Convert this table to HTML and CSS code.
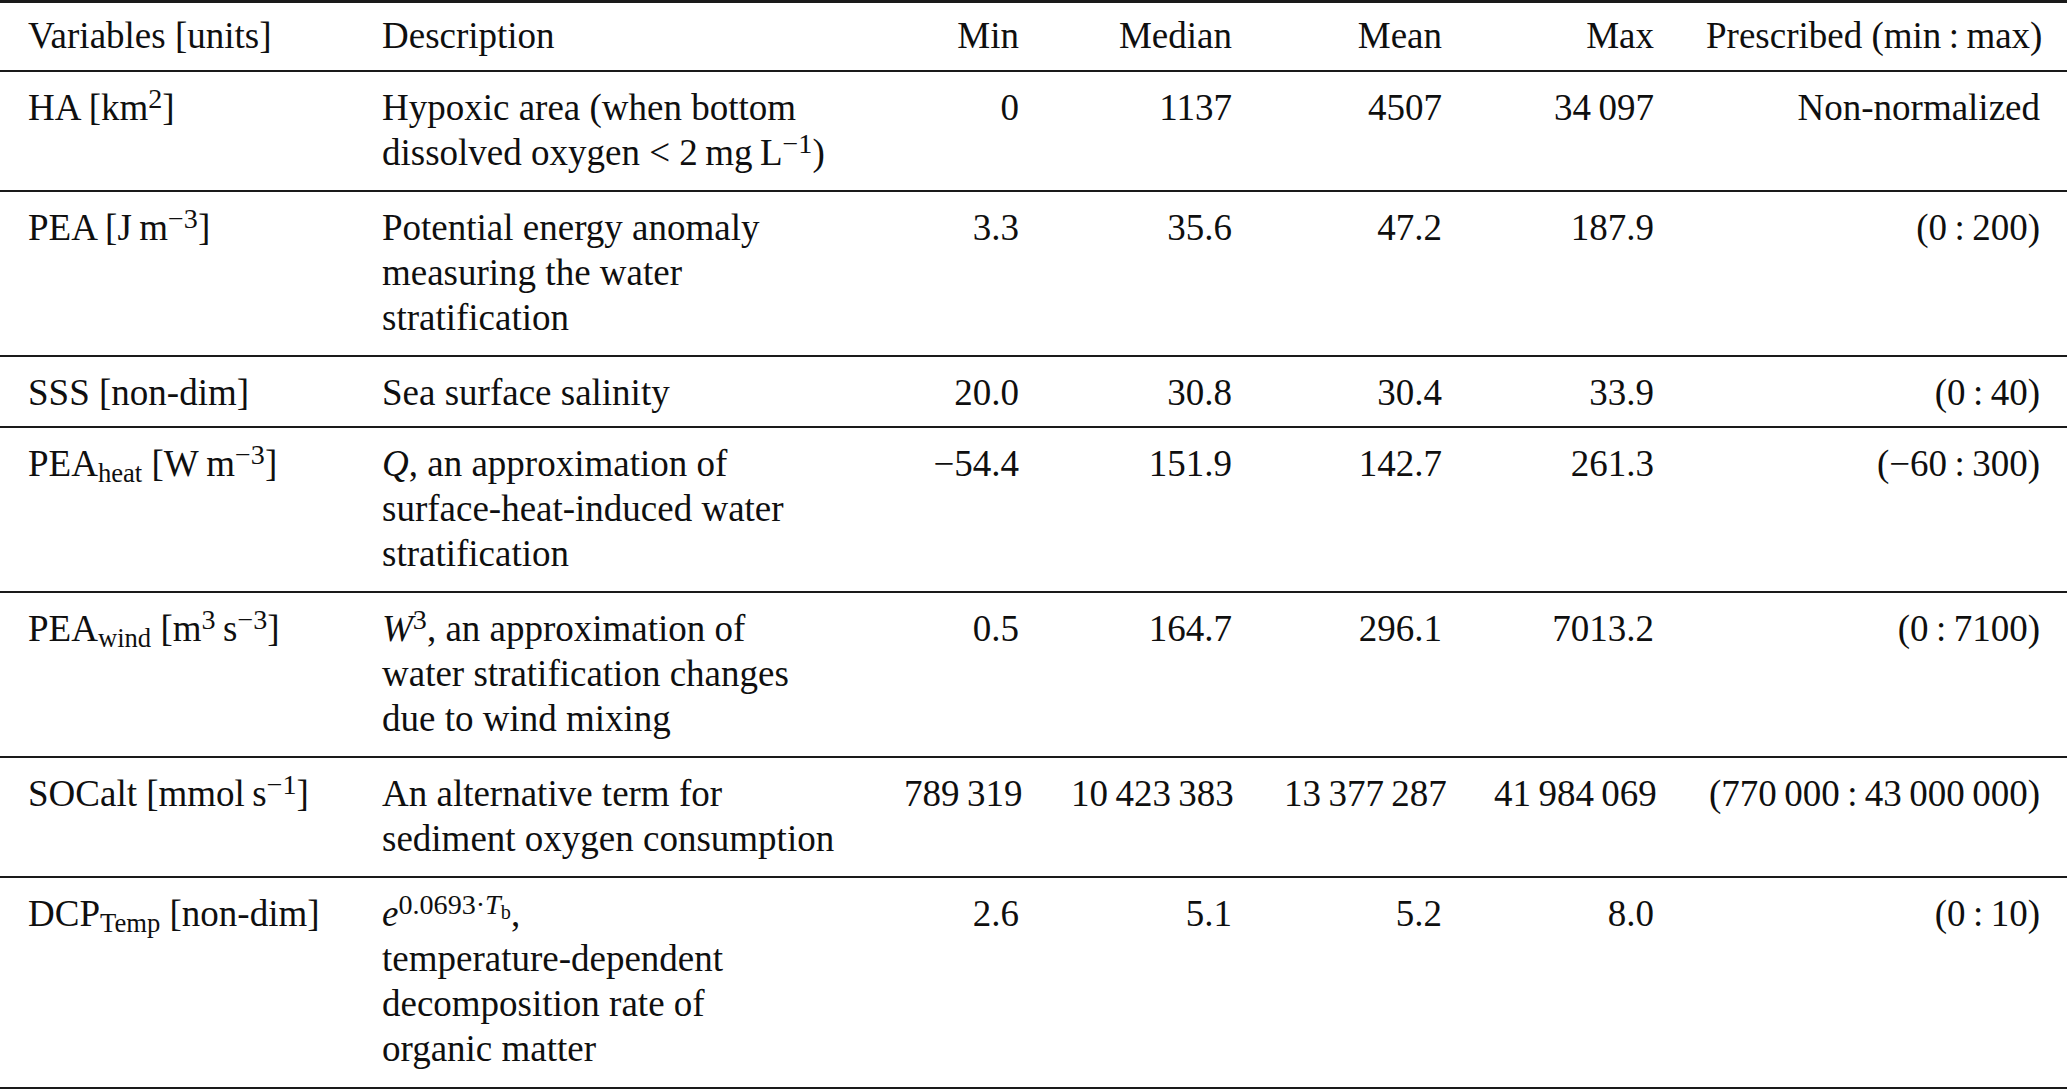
FILE: index.html
```html
<!DOCTYPE html>
<html lang="en">
<head>
<meta charset="utf-8">
<title>Variables</title>
<link rel="stylesheet" href="styles.css">
</head>
<body>
<table class="vars">
  <colgroup>
    <col class="c-var">
    <col class="c-desc">
    <col class="c-min">
    <col class="c-med">
    <col class="c-mean">
    <col class="c-max">
    <col class="c-pre">
  </colgroup>
  <thead>
    <tr class="head">
      <th class="var">Variables [units]</th>
      <th class="desc">Description</th>
      <th class="num">Min</th>
      <th class="num">Median</th>
      <th class="num">Mean</th>
      <th class="num">Max</th>
      <th class="num last">Prescribed (min&thinsp;:&thinsp;max)</th>
    </tr>
  </thead>
  <tbody>
    <tr>
      <td class="var">HA [km<span class="sup">2</span>]</td>
      <td class="desc">Hypoxic area (when bottom<br>dissolved oxygen &lt; 2&thinsp;mg&thinsp;L<span class="sup">−1</span>)</td>
      <td class="num">0</td>
      <td class="num">1137</td>
      <td class="num">4507</td>
      <td class="num">34&thinsp;097</td>
      <td class="num last">Non-normalized</td>
    </tr>
    <tr>
      <td class="var">PEA [J&thinsp;m<span class="sup">−3</span>]</td>
      <td class="desc">Potential energy anomaly<br>measuring the water<br>stratification</td>
      <td class="num">3.3</td>
      <td class="num">35.6</td>
      <td class="num">47.2</td>
      <td class="num">187.9</td>
      <td class="num last">(0&thinsp;:&thinsp;200)</td>
    </tr>
    <tr class="single">
      <td class="var">SSS [non-dim]</td>
      <td class="desc">Sea surface salinity</td>
      <td class="num">20.0</td>
      <td class="num">30.8</td>
      <td class="num">30.4</td>
      <td class="num">33.9</td>
      <td class="num last">(0&thinsp;:&thinsp;40)</td>
    </tr>
    <tr>
      <td class="var">PEA<span class="sub">heat</span> [W&thinsp;m<span class="sup">−3</span>]</td>
      <td class="desc"><i>Q</i>, an approximation of<br>surface-heat-induced water<br>stratification</td>
      <td class="num">−54.4</td>
      <td class="num">151.9</td>
      <td class="num">142.7</td>
      <td class="num">261.3</td>
      <td class="num last">(−60&thinsp;:&thinsp;300)</td>
    </tr>
    <tr>
      <td class="var">PEA<span class="sub">wind</span> [m<span class="sup">3</span>&thinsp;s<span class="sup">−3</span>]</td>
      <td class="desc"><i>W</i><span class="sup">3</span>, an approximation of<br>water stratification changes<br>due to wind mixing</td>
      <td class="num">0.5</td>
      <td class="num">164.7</td>
      <td class="num">296.1</td>
      <td class="num">7013.2</td>
      <td class="num last">(0&thinsp;:&thinsp;7100)</td>
    </tr>
    <tr>
      <td class="var">SOCalt [mmol&thinsp;s<span class="sup">−1</span>]</td>
      <td class="desc">An alternative term for<br>sediment oxygen consumption</td>
      <td class="num">789&thinsp;319</td>
      <td class="num">10&thinsp;423&thinsp;383</td>
      <td class="num">13&thinsp;377&thinsp;287</td>
      <td class="num">41&thinsp;984&thinsp;069</td>
      <td class="num last">(770&thinsp;000&thinsp;:&thinsp;43&thinsp;000&thinsp;000)</td>
    </tr>
    <tr class="final">
      <td class="var">DCP<span class="sub">Temp</span> [non-dim]</td>
      <td class="desc"><i>e</i><span class="sup">0.0693·<i>T</i><span class="subsub">b</span></span>,<br>temperature-dependent<br>decomposition rate of<br>organic matter</td>
      <td class="num">2.6</td>
      <td class="num">5.1</td>
      <td class="num">5.2</td>
      <td class="num">8.0</td>
      <td class="num last">(0&thinsp;:&thinsp;10)</td>
    </tr>
  </tbody>
</table>
</body>
</html>
```

FILE: styles.css
```css
html, body {
  margin: 0;
  padding: 0;
  background: #ffffff;
}

.vars {
  width: 2067px;
  table-layout: fixed;
  border-collapse: collapse;
  font-family: "Liberation Serif", "Times New Roman", serif;
  font-size: 37px;
  line-height: 45px;
  color: #0f0f0f;
  border-top: 3px solid #1a1a1a;
  border-bottom: 2px solid #1a1a1a;
}

.c-var { width: 356px; }
.c-desc { width: 522px; }
.c-min { width: 167px; }
.c-med { width: 213px; }
.c-mean { width: 210px; }
.c-max { width: 212px; }
.c-pre { width: 387px; }

.vars th,
.vars td {
  font-weight: normal;
  vertical-align: top;
  padding: 13px 26px 15px 26px;
  white-space: nowrap;
  text-align: left;
}

.vars tr {
  border-bottom: 2px solid #1a1a1a;
}

.vars tr.final {
  border-bottom: none;
}

.vars .head th {
  padding-top: 10px;
  padding-bottom: 12px;
}

.vars tr.single td {
  padding-bottom: 11px;
}

.vars tr.final td {
  padding-bottom: 16px;
}

.vars .var {
  padding-left: 28px;
}

.vars .num {
  text-align: right;
}

.vars .last {
  padding-right: 27px;
}

.sup {
  font-size: 0.76em;
  line-height: 0;
  vertical-align: 0.44em;
}

.sub {
  font-size: 0.72em;
  line-height: 0;
  vertical-align: -0.22em;
}

.subsub {
  font-size: 0.72em;
  line-height: 0;
  vertical-align: -0.25em;
}

i {
  font-style: italic;
}
```
